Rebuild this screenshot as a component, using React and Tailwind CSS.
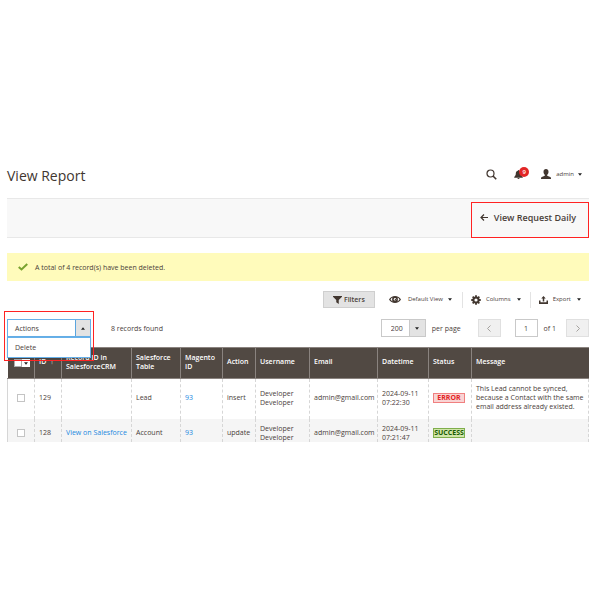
import React from 'react';

// --- GRID DATA ---
const columns = [
  { label: 'ID', width: 'w-[27px]', sorted: true },
  { label: 'Record ID in SalesforceCRM', width: 'w-[70px]' },
  { label: 'Salesforce Table', width: 'w-[49px]' },
  { label: 'Magento ID', width: 'w-[42px]' },
  { label: 'Action', width: 'w-[33px]' },
  { label: 'Username', width: 'w-[54px]' },
  { label: 'Email', width: 'w-[68px]' },
  { label: 'Datetime', width: 'w-[51px]' },
  { label: 'Status', width: 'w-[43px]' },
  { label: 'Message', width: '' },
];

const rows = [
  {
    id: 129,
    record: '',
    table: 'Lead',
    magento: 93,
    action: 'insert',
    email: 'admin@gmail.com',
    date: '2024-09-11',
    time: '07:22:30',
    status: 'ERROR',
    message: 'This Lead cannot be synced, because a Contact with the same email address already existed.',
    className: 'h-10 bg-white [&>td]:pb-[2px]',
  },
  {
    id: 128,
    record: 'View on Salesforce',
    table: 'Account',
    magento: 93,
    action: 'update',
    email: 'admin@gmail.com',
    date: '2024-09-11',
    time: '07:21:47',
    status: 'SUCCESS',
    message: '',
    className: 'bg-[#f5f5f5] [&>td]:pt-[5px]',
  },
];

const Caret = ({ up = false }) => (
  <svg viewBox="0 0 10 6" className="w-[4px] h-[3px] shrink-0" fill="#222" aria-hidden="true">
    <path d={up ? 'M0 6h10L5 0z' : 'M0 0h10L5 6z'} />
  </svg>
);

const SearchIcon = () => (
  <svg viewBox="0 0 22 22" className="w-[11px] h-[11px]" fill="none" stroke="#41362f" aria-hidden="true">
    <circle cx="9" cy="9" r="7" strokeWidth="2.4" />
    <path d="M14 14l6.5 6.5" strokeWidth="3.2" />
  </svg>
);

const BellIcon = () => (
  <svg viewBox="0 0 20 20" className="w-[9px] h-[9px]" fill="#41362f" aria-hidden="true">
    <path d="M10 0c1 0 1.6.7 1.6 1.6C15 2.500 16 5 16 8c0 4 1.500 6 3.500 7.500v1.500H.5v-1.500C2.500 14 4 12 4 8c0-3 1-5.500 4.400-6.400C8.400.7 9 0 10 0z" />
    <path d="M7.500 18h5c-.3 1.300-1.200 2-2.500 2s-2.200-.7-2.500-2z" />
  </svg>
);

const UserIcon = () => (
  <svg viewBox="0 0 20 20" className="w-[10px] h-[10px]" fill="#41362f" aria-hidden="true">
    <path d="M10 0c3 0 5 2 5 5.300 0 2.700-1 5-2.600 6.300v2L18.500 16c1 .5 1.500 1.500 1.500 3v1H0v-1c0-1.500.5-2.500 1.500-3l6.100-2.400v-2C6 10.300 5 8 5 5.300 5 2 7 0 10 0z" />
  </svg>
);

const BackIcon = () => (
  <svg viewBox="0 0 16 14" className="w-[8px] h-[7px]" fill="none" stroke="#41362f" strokeWidth="2.400" aria-hidden="true">
    <path d="M8 1L2 7l6 6M2 7h14" />
  </svg>
);

const CheckIcon = () => (
  <svg viewBox="0 0 20 16" className="w-[10px] h-[8px]" fill="none" stroke="#79a22e" strokeWidth="4" aria-hidden="true">
    <path d="M1.500 8L7 13 18.500 2" />
  </svg>
);

const FunnelIcon = () => (
  <svg viewBox="0 0 18 16" className="w-[9px] h-[8px]" fill="#41362f" aria-hidden="true">
    <path d="M0 0h18v1.500L11.500 8v8L6.500 12.500V8L0 1.500z" />
  </svg>
);

const EyeIcon = () => (
  <svg viewBox="0 0 24 14" className="w-[12px] h-[7px]" aria-hidden="true">
    <path fill="#41362f" d="M12 0c5 0 9.500 3 12 7-2.500 4-7 7-12 7S2.500 11 0 7c2.500-4 7-7 12-7z" />
    <path fill="#fff" d="M7 3.200C6 5.500 6 8.500 7 10.800 5.200 10 4 8.700 3 7 4 5.300 5.200 4 7 3.200zM17 3.200c1 2.300 1 5.300 0 7.600 1.800-.8 3-2.100 4-3.800-1-1.700-2.200-3-4-3.800z" />
    <circle cx="12" cy="6.500" r="2.400" fill="#fff" />
    <circle cx="12.800" cy="7" r="1.300" fill="#41362f" />
  </svg>
);

const GearIcon = () => (
  <svg viewBox="0 0 20 20" className="w-[10px] h-[10px]" fill="none" stroke="#41362f" aria-hidden="true">
    <circle cx="10" cy="10" r="5.200" strokeWidth="4" />
    <path
      d="M10 .5v3.500M10 16v3.500M.5 10H4M16 10h3.500M3.300 3.300l2.500 2.500M14.200 14.200l2.500 2.500M3.300 16.700l2.500-2.500M14.200 5.800l2.500-2.500"
      strokeWidth="3.600"
    />
  </svg>
);

const ExportIcon = () => (
  <svg viewBox="0 0 18 16" className="w-[9px] h-[8px]" fill="#41362f" aria-hidden="true">
    <path d="M9 0l4.500 5h-3v6h-3V5h-3z" />
    <path d="M0 9h3v3.500h12V9h3v7H0z" />
  </svg>
);

const Chevron = ({ right = false }) => (
  <svg viewBox="0 0 8 14" className="w-[4px] h-[7px]" fill="none" stroke="#a5a29f" strokeWidth="2" aria-hidden="true">
    <path d={right ? 'M1 1l6 6-6 6' : 'M7 1L1 7l6 6'} />
  </svg>
);

const Checkbox = ({ label }) => (
  <input
    type="checkbox"
    aria-label={label}
    className="appearance-none block mx-auto w-[8px] h-[8px] border border-[#c4c4c4] bg-white"
  />
);

const StatusBadge = ({ status }) => (
  <span
    className={
      status === 'ERROR'
        ? 'flex items-center justify-center h-[10px] w-[32px] border border-[#f08080] bg-[#f9d4d4] text-[#e22626] font-bold'
        : 'flex items-center justify-center h-[10px] w-[32px] border border-[#7fae4b] bg-[#d0e5a9] text-[#185b00] font-bold'
    }
  >
    {status}
  </span>
);

/* --- Title, search, notifications, account --- */
const PageHeader = () => (
  <header className="flex items-center justify-between h-8 pr-[7px]">
    <h1 className="text-[14px] leading-none text-[#41362f]">View Report</h1>
    <div className="flex items-center pb-1">
      <button type="button" aria-label="Search">
        <SearchIcon />
      </button>
      <button type="button" aria-label="Notifications" className="relative ml-[17px]">
        <BellIcon />
        <span className="absolute left-[5px] -top-[3px] flex items-center justify-center w-[10px] h-[10px] rounded-full bg-[#e22626] text-white text-[6px] leading-none font-semibold">
          9
        </span>
      </button>
      <button type="button" className="flex items-center ml-[18px]">
        <UserIcon />
        <span className="ml-[5px] mr-[4px] text-[6px]">admin</span>
        <Caret />
      </button>
    </div>
  </header>
);

/* --- Filters, view, columns, export --- */
const GridControls = () => (
  <div className="flex items-center justify-end h-[17px] mt-[10px] pr-[8px] text-[6px]">
    <button
      type="button"
      className="flex items-center justify-center gap-[2px] w-[52px] h-[17px] mr-[14px] border border-[#cfcfcf] bg-[#e3e3e3] text-[7px] font-semibold"
    >
      <FunnelIcon />
      Filters
    </button>
    <button type="button" className="flex items-center">
      <EyeIcon />
      <span className="ml-[7px] mr-[5px]">Default View</span>
      <Caret />
    </button>
    <button type="button" className="flex items-center h-4 ml-[10px] pl-[8px] border-l border-[#e3e3e3]">
      <GearIcon />
      <span className="ml-[5px] mr-[6px]">Columns</span>
      <Caret />
    </button>
    <button type="button" className="flex items-center h-4 ml-[9px] pl-[8px] border-l border-[#e3e3e3]">
      <ExportIcon />
      <span className="ml-[5px] mr-[6px]">Export</span>
      <Caret />
    </button>
  </div>
);

const MassActions = () => (
  <div className="relative w-[84px]">
    <button
      type="button"
      aria-expanded="true"
      className="flex items-stretch w-full h-[18px] border border-[#007bdb]/60 bg-white"
    >
      <span className="flex flex-1 items-center pl-[7px]">Actions</span>
      <span className="flex w-[15px] items-center justify-center border-l border-[#007bdb]/60 bg-[#e3e3e3]">
        <Caret up />
      </span>
    </button>
    <ul className="absolute z-10 left-0 top-[18px] w-full border border-[#007bdb]/60 bg-white shadow-sm">
      <li>
        <button type="button" className="flex w-full items-center h-[19px] pl-[7px]">
          Delete
        </button>
      </li>
    </ul>
    {/* highlight frame */}
    <div className="absolute z-20 -left-[3px] -top-[8px] w-[90px] h-[50px] border border-[#f22] pointer-events-none"></div>
  </div>
);

const Pager = () => (
  <div className="flex items-center">
    <div className="relative">
      <select
        id="page-size"
        defaultValue="200"
        className="appearance-none block w-[45px] h-[18px] pl-[9px] border border-[#c9c9c9] bg-white"
      >
        <option>200</option>
      </select>
      <span className="absolute right-px top-px flex items-center justify-center w-[16px] h-[16px] border-l border-[#c9c9c9] bg-[#e3e3e3] pointer-events-none">
        <Caret />
      </span>
    </div>
    <label htmlFor="page-size" className="ml-[6px]">
      per page
    </label>
    <button
      type="button"
      aria-label="Previous page"
      className="flex items-center justify-center w-[23px] h-[18px] ml-[17px] border border-[#e0e0e0] bg-[#f0f0f0]"
    >
      <Chevron />
    </button>
    <input
      id="page-number"
      type="text"
      defaultValue="1"
      className="w-[23px] h-[18px] ml-[14px] border border-[#c9c9c9] bg-white text-center"
    />
    <label htmlFor="page-number" className="ml-[6px]">
      of 1
    </label>
    <button
      type="button"
      aria-label="Next page"
      className="flex items-center justify-center w-[23px] h-[18px] ml-[10px] border border-[#e0e0e0] bg-[#f0f0f0]"
    >
      <Chevron right />
    </button>
  </div>
);

const ReportTable = () => (
  <table className="w-full mt-[10px] table-fixed border-collapse text-left text-[7px] leading-[9px]">
    <thead>
      <tr className="h-[31px] bg-[#514943] text-white">
        <th className="w-[27px] p-0 border-t border-b border-[#8a837f]">
          <div className="flex ml-[6px]">
            <input
              type="checkbox"
              aria-label="Select all"
              className="appearance-none w-[8px] h-[8px] border border-[#adadad] bg-white"
            />
            <button type="button" aria-label="Selection options" className="flex items-center justify-center w-[8px] h-[8px] bg-white">
              <Caret />
            </button>
          </div>
        </th>
        {columns.map((col) => (
          <th key={col.label} className={`${col.width} pl-[4px] pr-0 pt-0 pb-[3px] border border-r-0 border-[#8a837f] font-semibold`}>
            {col.label}
            {col.sorted && <span className="ml-[4px] font-normal">↑</span>}
          </th>
        ))}
      </tr>
    </thead>
    <tbody className="[&_td+td]:pl-[4px] [&_td+td]:border-l [&_td+td]:border-dashed [&_td+td]:border-[#d6d6d6]">
      {rows.map((row) => (
        <tr key={row.id} className={row.className}>
          <td className="border-l border-[#d6d6d6]">
            <Checkbox label={`Select record ${row.id}`} />
          </td>
          <td>{row.id}</td>
          <td className="whitespace-nowrap">
            {row.record && <a href="#record" className="text-[#1a88df]">{row.record}</a>}
          </td>
          <td>{row.table}</td>
          <td>
            <a href="#magento" className="text-[#1a88df]">{row.magento}</a>
          </td>
          <td>{row.action}</td>
          <td>
            Developer
            <br />
            Developer
          </td>
          <td className="whitespace-nowrap">{row.email}</td>
          <td>
            {row.date}
            <br />
            {row.time}
          </td>
          <td>
            <StatusBadge status={row.status} />
          </td>
          <td className="border-r border-r-[#e3e3e3]">{row.message}</td>
        </tr>
      ))}
    </tbody>
  </table>
);

export default function App() {
  return (
    <main
      className="bg-white pt-40 pl-[7px] pr-[11px] text-[7px] leading-[9px] text-[#4a403a]"
      style={{ fontFamily: "'Open Sans', sans-serif" }}
    >
      <PageHeader />

      {/* toolbar */}
      <div className="flex justify-end mt-[6px] pt-[3px] h-10 border-t border-b border-[#e8e8e8] bg-[#f8f8f8]">
        <button
          type="button"
          className="flex items-center justify-center gap-[6px] w-[118px] h-[36px] pb-[5px] pr-[4px] border border-[#f22] text-[9px] font-semibold"
        >
          <BackIcon />
          View Request Daily
        </button>
      </div>

      {/* success message */}
      <div role="status" className="flex items-center h-7 mt-[15px] pl-[11px] gap-[7px] bg-[#fffbbb]">
        <CheckIcon />
        A total of 4 record(s) have been deleted.
      </div>

      <GridControls />

      <div className="flex items-center justify-between mt-[11px]">
        <div className="flex items-center gap-[20px]">
          <MassActions />
          <span>8 records found</span>
        </div>
        <Pager />
      </div>

      <ReportTable />
    </main>
  );
}
